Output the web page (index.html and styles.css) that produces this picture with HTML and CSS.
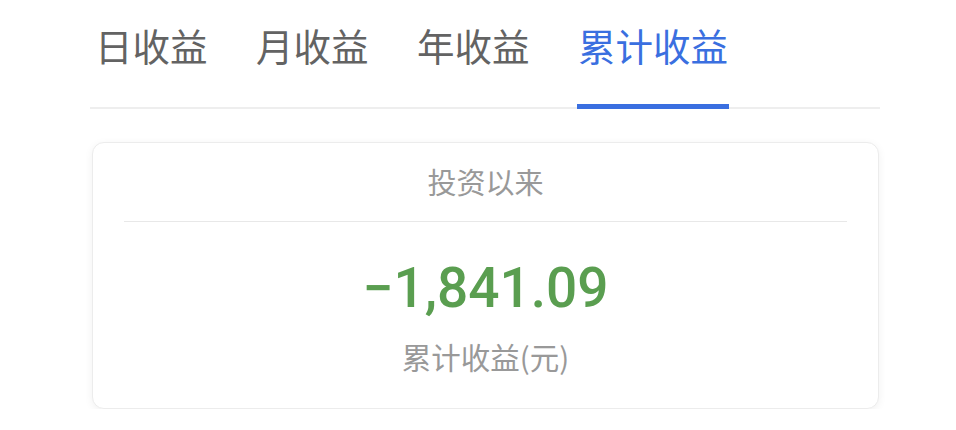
FILE: index.html
```html
<!DOCTYPE html>
<html lang="zh-CN">
<head>
    <meta charset="UTF-8">
    <meta name="viewport" content="width=device-width, initial-scale=1.0">
    <title>收益</title>
    <link rel="stylesheet" href="styles.css">
</head>
<body>
    <div class="page">
        <div class="tabs">
            <a class="tab" href="#">日收益</a>
            <a class="tab" href="#">月收益</a>
            <a class="tab" href="#">年收益</a>
            <a class="tab active" href="#">累计收益</a>
        </div>
        <div class="card">
            <div class="card-title">投资以来</div>
            <div class="card-line"></div>
            <div class="amount">&minus;1,841.09</div>
            <div class="amount-label">累计收益(元)</div>
        </div>
    </div>
</body>
</html>
```

FILE: styles.css
```css
body {
    margin: 0;
    background-color: #fff;
    font-family: "Noto Sans CJK SC", "Noto Sans", sans-serif;
}
.page {
    width: 790px;
    margin-left: 90px;
}
.tabs {
    display: flex;
    gap: 48.5px;
    padding-left: 5px;
    height: 107px;
    border-bottom: 2px solid #eeeeee;
}
.tab {
    position: relative;
    display: block;
    padding-top: 21px;
    font-size: 37.5px;
    line-height: 48px;
    color: #636363;
    text-decoration: none;
}
.tab.active {
    color: #3a6fe0;
}
.tab.active::after {
    content: "";
    position: absolute;
    left: -1px;
    right: -1px;
    bottom: -2px;
    height: 5px;
    background-color: #3a6fe0;
}
.card {
    margin: 33px 0 0 2px;
    width: 785px;
    padding-bottom: 34px;
    background-color: #fff;
    border: 1px solid #ececec;
    border-radius: 12px;
    box-shadow: 0 2px 8px rgba(0, 0, 0, 0.06);
    text-align: center;
}
.card-title {
    padding: 20px 0 22px;
    font-size: 29px;
    line-height: 36px;
    color: #999;
}
.card-line {
    height: 1px;
    margin: 0 31px;
    background-color: #e8e8e8;
}
.amount {
    margin-top: 33px;
    font-family: Roboto, "Noto Sans", sans-serif;
    font-size: 55px;
    font-weight: 500;
    line-height: 66px;
    color: #5a9e50;
}
.amount-label {
    margin-top: 17px;
    font-size: 29.5px;
    line-height: 36px;
    color: #999;
}
```
